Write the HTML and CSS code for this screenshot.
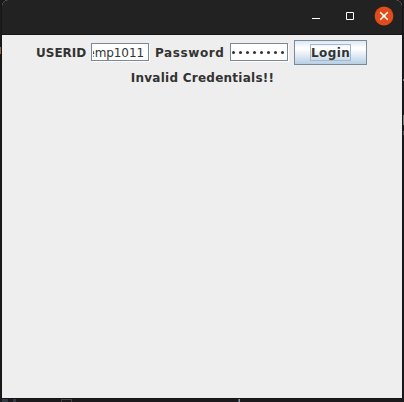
FILE: index.html
```
<!DOCTYPE html>
<html lang="en">
<head>
<meta charset="utf-8">
<title>Login</title>
<link rel="stylesheet" href="styles.css">
</head>
<body>
<main class="window">
  <header class="titlebar">
    <svg class="minimize" width="8" height="10" viewBox="0 0 8 10"><path d="M0 6.5H8"/></svg>
    <svg class="maximize" width="8" height="8" viewBox="0 0 8 8"><path d="M.5 .5H7.5V7.5H.5Z"/></svg>
    <svg class="close" width="20" height="20" viewBox="0 0 20 20"><circle cx="10" cy="10" r="9.4"/><path d="M6.2 6.2L13.8 13.8M13.8 6.2L6.2 13.8"/></svg>
  </header>
  <section class="content">
    <div class="row">
      <span class="label user">USERID</span>
      <div class="field"><div class="clip"><span class="value">emp1011</span></div></div>
      <span class="label pass">Password</span>
      <div class="field"><div class="clip"><span class="dots"><i></i><i></i><i></i><i></i><i></i><i></i><i></i><i></i></span></div></div>
      <button class="login"><span class="focus">Login</span></button>
    </div>
    <p class="message">Invalid Credentials!!</p>
  </section>
</main>
<div class="traces">
  <i class="t-left"></i><i class="t-right"></i><i class="t-right2"></i><i class="t-right3"></i>
  <i class="t-box"></i><i class="t-line"></i><i class="t-glyph"></i><i class="t-glyph2"></i>
</div>
</body>
</html>
```
FILE: styles.css
```
* { box-sizing: border-box; }
body {
  margin: 0;
  width: 404px;
  height: 402px;
  overflow: hidden;
  position: relative;
  background: #1c1a1c;
  font: bold 12px/14px "DejaVu Sans", sans-serif;
  color: #333;
}
.window {
  width: 400px;
  height: 398px;
  margin-left: 2px;
  background: #eee;
  border-radius: 6px 6px 0 0;
  overflow: hidden;
  box-shadow: 0 0 0 1px #151515;
}
.titlebar {
  height: 35px;
  background: #222;
  border-bottom: 1px solid #161616;
  display: flex;
  align-items: center;
  justify-content: flex-end;
  padding: 0 8px 2px 0;
}
.titlebar svg { fill: none; stroke: #fff; display: block; }
.minimize { margin: 2px 26px 0 0; }
.maximize { margin-right: 20px; }
.titlebar .close { stroke-width: 1.6; }
.close circle { fill: #e24c1a; stroke: none; }
.content { padding-top: 5px; }
.row {
  height: 25px;
  display: flex;
  align-items: center;
  padding-left: 34px;
}
.label { white-space: nowrap; }
.user { width: 55px; letter-spacing: 0; }
.pass { width: 75px; letter-spacing: .6px; }
.field {
  width: 58px;
  height: 18px;
  margin: 0 6px 1px 0;
  border: 1px solid #7a8a99;
  background: #fff;
  box-shadow: 1px 1px 0 #fff;
  padding: 0 3px 0 1px;
}
.clip {
  height: 16px;
  overflow: hidden;
  display: flex;
  justify-content: flex-end;
  align-items: center;
}
.field .value {
  font-weight: normal;
  letter-spacing: -.08px;
  margin: 1px 1px 0 0;
  white-space: nowrap;
}
.dots { display: flex; gap: 4px; margin-top: 1px; }
.dots i { width: 3px; height: 3px; border-radius: 1.5px; background: #333; }
.login {
  width: 73px;
  height: 25px;
  padding: 0;
  border: 1px solid #7a8a99;
  border-radius: 0;
  background: linear-gradient(#dde8f3 0, #fff 30%, #fff 35%, #b8cfe5 100%);
  font: inherit;
  color: #333;
  display: flex;
  align-items: center;
  justify-content: center;
}
.focus {
  width: 41px;
  height: 17px;
  border: 1px solid #a3b8cc;
  letter-spacing: .4px;
  line-height: 17px;
}
.message {
  margin: 6px 0 0;
  text-align: center;
  letter-spacing: .25px;
  text-indent: 1px;
}
.traces i { position: absolute; background: #555; }
.traces .t-left { left: 0; top: 47px; width: 1px; height: 7px; background: #95693c; }
.traces .t-right { left: 403px; top: 79px; width: 1px; height: 2px; background: #888; }
.traces .t-right2 { left: 403px; top: 115px; width: 1px; height: 10px; background: #777; }
.traces .t-right3 { left: 403px; top: 131px; width: 1px; height: 4px; }
.traces .t-box { left: 61px; top: 399px; width: 11px; height: 3px; background: none; border: 1px solid #454345; border-bottom: 0; }
.traces .t-line { left: 238px; top: 399px; width: 2px; height: 3px; background: #a09088; border-left: 1px solid #36648b; }
.traces .t-glyph { left: 2px; top: 399px; width: 6px; height: 3px; background: #303b43; }
.traces .t-glyph2 { left: 13px; top: 399px; width: 3px; height: 3px; background: #303b43; }
```
